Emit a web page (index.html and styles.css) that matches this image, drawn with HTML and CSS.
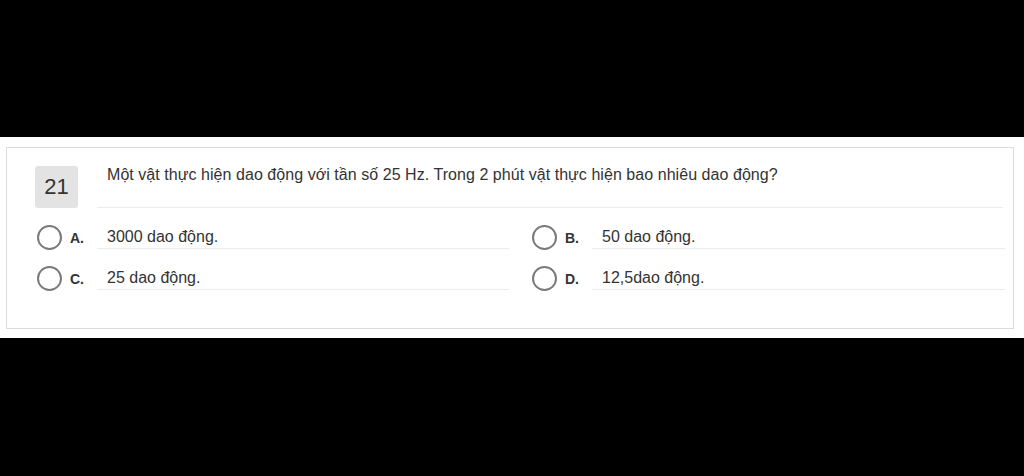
FILE: index.html
```html
<!DOCTYPE html>
<html lang="vi">
<head>
<meta charset="utf-8">
<title>Câu 21</title>
<link rel="stylesheet" href="styles.css">
</head>
<body>
<div class="band">
  <div class="card">
    <div class="head">
      <div class="num">21</div>
      <div class="question">Một vật thực hiện dao động với tần số 25 Hz. Trong 2 phút vật thực hiện bao nhiêu dao động?</div>
    </div>
    <div class="options">
      <div class="opt col1"><span class="radio"></span><span class="lab">A.</span><span class="ans">3000 dao động.</span></div>
      <div class="opt col2"><span class="radio"></span><span class="lab">B.</span><span class="ans">50 dao động.</span></div>
      <div class="opt col1"><span class="radio"></span><span class="lab">C.</span><span class="ans">25 dao động.</span></div>
      <div class="opt col2"><span class="radio"></span><span class="lab">D.</span><span class="ans">12,5dao động.</span></div>
    </div>
  </div>
</div>
</body>
</html>
```
FILE: styles.css
```css
html, body {
  margin: 0;
  padding: 0;
  background: #000;
  height: 100%;
}
body {
  font-family: "Liberation Sans", Arial, sans-serif;
  color: #333;
}
.band {
  margin-top: 137px;
  background: #fff;
  padding: 10px 10px 9px 6px;
}
.card {
  border: 1px solid #dcdcdc;
  padding: 0 8px 37px 0;
  background: #fff;
}
.head {
  display: flex;
  align-items: flex-start;
}
.num {
  width: 43px;
  height: 42px;
  margin: 18px 0 0 28px;
  background: #e3e3e3;
  border-radius: 3px;
  font-size: 22px;
  line-height: 42px;
  text-align: center;
  color: #333;
}
.question {
  flex: 1;
  margin-left: 19px;
  margin-right: 2px;
  padding: 17px 10px 0;
  height: 42px;
  border-bottom: 1px solid #ececec;
  font-size: 16px;
  line-height: 20px;
  letter-spacing: 0.05px;
}
.options {
  display: grid;
  grid-template-columns: 495px 1fr;
  row-gap: 18px;
  margin: 19px 0 0 30px;
}
.opt {
  display: flex;
  align-items: flex-start;
}
.col1 {
  padding-right: 23px;
}
.radio {
  width: 21px;
  height: 21px;
  border: 2px solid #7a7a7a;
  border-radius: 50%;
  margin: -2px 8px 0 0;
  flex: none;
}
.lab {
  width: 27px;
  font-size: 14px;
  font-weight: bold;
  line-height: 20px;
  margin-top: 1px;
  flex: none;
}
.ans {
  flex: 1;
  padding: 0 10px 1px;
  border-bottom: 1px solid #ececec;
  font-size: 16px;
  line-height: 20px;
}
```
